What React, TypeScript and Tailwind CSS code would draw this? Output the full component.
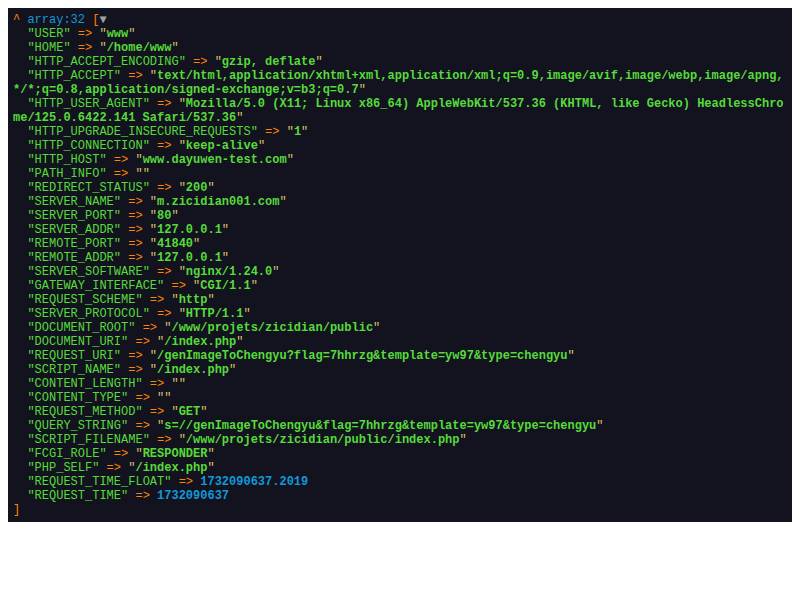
const entries: [string, string | number][] = [
  ['USER', 'www'],
  ['HOME', '/home/www'],
  ['HTTP_ACCEPT_ENCODING', 'gzip, deflate'],
  ['HTTP_ACCEPT', 'text/html,application/xhtml+xml,application/xml;q=0.9,image/avif,image/webp,image/apng,*/*;q=0.8,application/signed-exchange;v=b3;q=0.7'],
  ['HTTP_USER_AGENT', 'Mozilla/5.0 (X11; Linux x86_64) AppleWebKit/537.36 (KHTML, like Gecko) HeadlessChrome/125.0.6422.141 Safari/537.36'],
  ['HTTP_UPGRADE_INSECURE_REQUESTS', '1'],
  ['HTTP_CONNECTION', 'keep-alive'],
  ['HTTP_HOST', 'www.dayuwen-test.com'],
  ['PATH_INFO', ''],
  ['REDIRECT_STATUS', '200'],
  ['SERVER_NAME', 'm.zicidian001.com'],
  ['SERVER_PORT', '80'],
  ['SERVER_ADDR', '127.0.0.1'],
  ['REMOTE_PORT', '41840'],
  ['REMOTE_ADDR', '127.0.0.1'],
  ['SERVER_SOFTWARE', 'nginx/1.24.0'],
  ['GATEWAY_INTERFACE', 'CGI/1.1'],
  ['REQUEST_SCHEME', 'http'],
  ['SERVER_PROTOCOL', 'HTTP/1.1'],
  ['DOCUMENT_ROOT', '/www/projets/zicidian/public'],
  ['DOCUMENT_URI', '/index.php'],
  ['REQUEST_URI', '/genImageToChengyu?flag=7hhrzg&template=yw97&type=chengyu'],
  ['SCRIPT_NAME', '/index.php'],
  ['CONTENT_LENGTH', ''],
  ['CONTENT_TYPE', ''],
  ['REQUEST_METHOD', 'GET'],
  ['QUERY_STRING', 's=//genImageToChengyu&flag=7hhrzg&template=yw97&type=chengyu'],
  ['SCRIPT_FILENAME', '/www/projets/zicidian/public/index.php'],
  ['FCGI_ROLE', 'RESPONDER'],
  ['PHP_SELF', '/index.php'],
  ['REQUEST_TIME_FLOAT', 1732090637.2019],
  ['REQUEST_TIME', 1732090637],
];

export default function App() {
  return (
    <div className="bg-white min-h-[600px] p-2">
      <pre className="bg-[#13121F] text-[#FF8400] p-[5px] text-[12px] leading-[14px] whitespace-pre-wrap break-all font-['Liberation_Mono',monospace]">
        <span>^ </span>
        <span className="text-[#1299DA]">array:32</span>
        <span> [</span>
        <span className="text-[#A0A0A0]">▼</span>
        {'\n'}
        {entries.map(([key, value]) => (
          <span key={key}>
            {'  '}
            <span className="text-[#56DB3A]">"{key}"</span>
            {' => '}
            {typeof value === 'number' ? (
              <span className="text-[#1299DA] font-bold">{value}</span>
            ) : (
              <>
                <span className="text-[#D6C26A]">"</span>
                <span className="text-[#56DB3A] font-bold">{value}</span>
                <span className="text-[#D6C26A]">"</span>
              </>
            )}
            {'\n'}
          </span>
        ))}
        <span>]</span>
      </pre>
    </div>
  );
}
